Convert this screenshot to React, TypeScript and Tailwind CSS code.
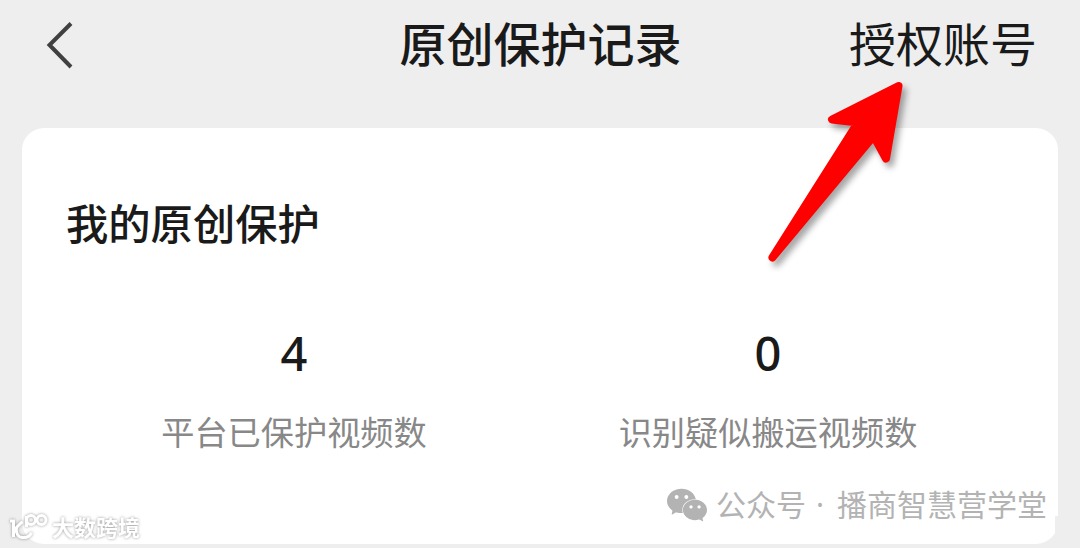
import React from 'react';
import { SiWechat } from 'react-icons/si';

interface Stat {
  value: number;
  label: string;
}

const STATS: Stat[] = [
  { value: 4, label: '平台已保护视频数' },
  { value: 0, label: '识别疑似搬运视频数' },
];

function BackIcon() {
  return (
    <svg width="28" height="48" viewBox="0 0 28 48" fill="none" stroke="#404040" strokeWidth="4">
      <path d="M25 1.500 3.500 23 25 45" />
    </svg>
  );
}

function PointerArrow() {
  return (
    <svg
      className="pointer-events-none absolute left-[750px] top-[70px] drop-shadow-[4px_5px_3px_rgba(0,0,0,0.35)]"
      width="170"
      height="205"
      viewBox="750 70 170 205"
    >
      <path
        d="M898.500 86 832 119.500 858 122.500 772.500 257.500 873.700 136 886 158.500Z"
        fill="#fe0000"
        stroke="#fe0000"
        strokeWidth="8"
        strokeLinejoin="round"
      />
    </svg>
  );
}

function SiteMark() {
  return (
    <div className="absolute left-[8px] top-[510px] flex items-center text-white drop-shadow-[0_0_1.5px_rgba(0,0,0,0.4)]">
      <svg width="44" height="32" viewBox="8 510 44 32" fill="none" stroke="currentColor" strokeWidth="3">
        <path d="M10 521H13.500V537" />
        <path d="M22.500 521.500 16.500 527.500C15.500 533 18 537 22 537.500 26.500 538 30 536.500 31.500 532.500" />
        <path d="M26.500 527V516" />
        <circle cx="31" cy="520" r="4.500" />
        <circle cx="41.500" cy="520" r="4.500" />
      </svg>
      <span className="text-[22px] font-bold leading-8">大数跨境</span>
    </div>
  );
}

export default function App() {
  return (
    <div className="relative flex h-[548px] w-[1080px] flex-col overflow-hidden bg-[#eeeeee] font-['Noto_Sans_CJK_SC',sans-serif] text-[#1a1a1a]">
      {/* Header */}
      <header className="grid h-32 grid-cols-[1fr_auto_1fr] items-start pl-[45px] pr-[44px]">
        <div className="pl-px pt-[22px]">
          <BackIcon />
        </div>
        <h1 className="pt-[7px] text-[47px] font-medium leading-[70px]">原创保护记录</h1>
        <span className="-mr-px justify-self-end pt-[7px] text-[47px] leading-[70px]">授权账号</span>
      </header>

      {/* Summary card */}
      <main className="mx-[22px] h-[416px] rounded-[22px] bg-white">
        <h2 className="pl-[44px] pt-[63px] text-[42.300px] font-medium leading-[62px]">我的原创保护</h2>
        <div className="mt-[65px] grid grid-cols-[544px_404px]">
          {STATS.map((stat) => (
            <div key={stat.label} className="flex flex-col items-center">
              <span className="font-['Noto_Sans',sans-serif] text-[47px] font-medium leading-[70px]">
                {stat.value}
              </span>
              <span className="mt-[18px] text-[33.200px] leading-[50px] text-[#888888]">{stat.label}</span>
            </div>
          ))}
        </div>
      </main>

      <div className="absolute left-[1055px] top-[516px] h-8 w-1 bg-[#eeeeee]" />

      {/* Account watermark */}
      <div className="absolute left-[667px] top-[480px] flex items-center text-[#b3b3b3]">
        <SiWechat size={40} className="mt-0.5" />
        <div className="ml-[9px] flex text-[30px] leading-[46px]">
          <span>公众号</span>
          <span className="w-[31px] pl-[10px] pt-0.5 font-['Noto_Sans',sans-serif]">·</span>
          <span>播商智慧营学堂</span>
        </div>
      </div>

      <SiteMark />
      <PointerArrow />
    </div>
  );
}
